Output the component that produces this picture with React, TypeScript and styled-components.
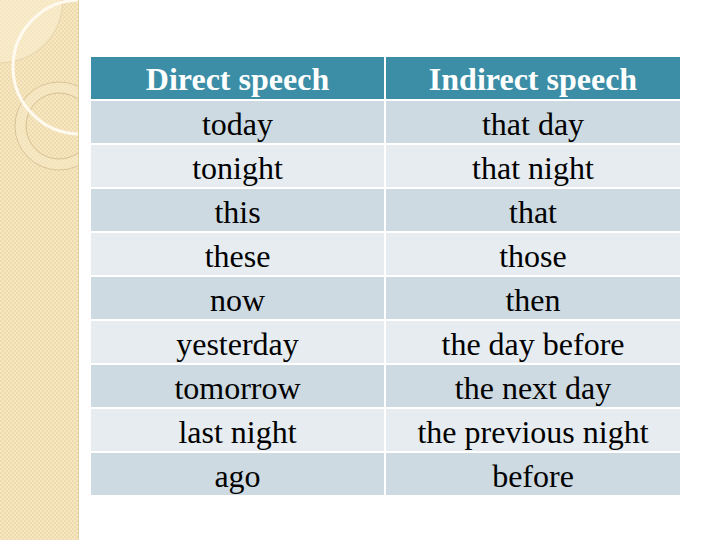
import React from 'react';
import styled, { createGlobalStyle } from 'styled-components';

const rows: [string, string][] = [
  ['today', 'that day'],
  ['tonight', 'that night'],
  ['this', 'that'],
  ['these', 'those'],
  ['now', 'then'],
  ['yesterday', 'the day before'],
  ['tomorrow', 'the next day'],
  ['last night', 'the previous night'],
  ['ago', 'before'],
];

const App = () => {
  return (
    <>
      <GlobalStyle />
      <Slide>
        <Strip>
          <svg width="78" height="540" viewBox="0 0 78 540">
            <circle cx="0" cy="0" r="63" fill="#fbf3dc" fillOpacity="0.45" />
            <circle cx="0" cy="0" r="63" fill="none" stroke="#e6d3a8" strokeWidth="1" />
            <circle cx="59" cy="126" r="44" fill="none" stroke="#d8c194" strokeWidth="1" />
            <circle cx="59" cy="126" r="38.5" fill="none" stroke="#f8eccd" strokeWidth="10" strokeOpacity="0.45" />
            <circle cx="59" cy="126" r="33" fill="none" stroke="#d8c194" strokeWidth="1" />
            <circle cx="80" cy="67" r="67" fill="none" stroke="#fffaf0" strokeWidth="3" />
          </svg>
        </Strip>
        <Content>
          <Table>
            <HeadCell>Direct speech</HeadCell>
            <HeadCell>Indirect speech</HeadCell>
            {rows.map(([direct, indirect], i) => (
              <React.Fragment key={direct}>
                <Cell $odd={i % 2 === 0}>{direct}</Cell>
                <Cell $odd={i % 2 === 0}>{indirect}</Cell>
              </React.Fragment>
            ))}
          </Table>
        </Content>
      </Slide>
    </>
  );
};

const GlobalStyle = createGlobalStyle`
  body {
    margin: 0;
    background: #fff;
    font-family: "Liberation Serif", "Times New Roman", serif;
  }
`;

const Slide = styled.div`
  display: flex;
  width: 720px;
  height: 540px;
  overflow: hidden;
`;

const Strip = styled.div`
  width: 78px;
  height: 540px;
  flex-shrink: 0;
  border-right: 1px solid #e2cf9f;
  background-color: #f3e2b9;
  background-image: repeating-conic-gradient(#f6e6c2 0 25%, #efdcae 0 50%);
  background-size: 4px 4px;

  svg {
    display: block;
  }
`;

const Content = styled.div`
  padding: 57px 0 0 12px;
`;

const Table = styled.div`
  display: grid;
  grid-template-columns: 293px 294px;
  grid-auto-rows: 42px;
  gap: 2px;
  width: 589px;
`;

const HeadCell = styled.div`
  display: flex;
  align-items: center;
  justify-content: center;
  background: #3b8ea6;
  color: #fff;
  font-family: "Liberation Serif", serif;
  font-size: 32px;
  font-weight: bold;
  line-height: 1;
  padding-top: 2px;
`;

const Cell = styled.div<{ $odd: boolean }>`
  display: flex;
  align-items: center;
  justify-content: center;
  background: ${(p) => (p.$odd ? '#cedae1' : '#e6ecf0')};
  color: #000;
  font-family: "Liberation Serif", serif;
  font-size: 32px;
  line-height: 1;
  padding-top: 4px;
`;

export default App;
